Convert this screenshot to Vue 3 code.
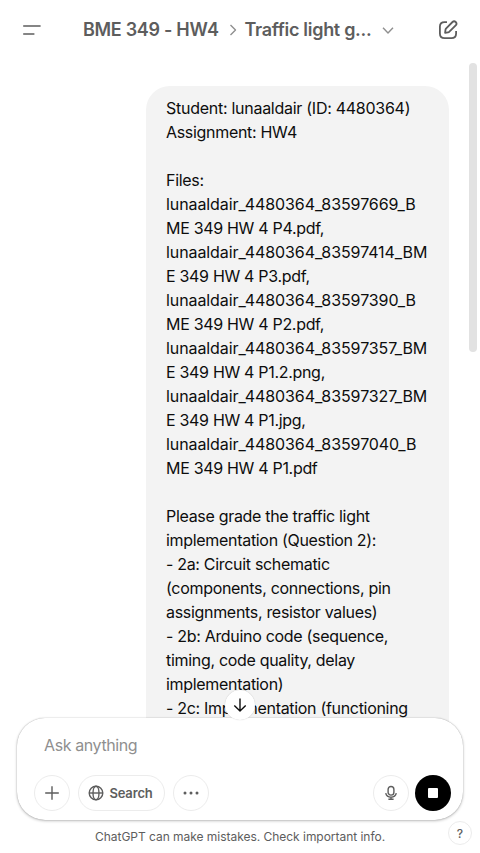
<script setup>
const lines = [
  'Student: lunaaldair (ID: 4480364)',
  'Assignment: HW4',
  '',
  'Files:',
  'lunaaldair_4480364_83597669_B',
  'ME 349 HW 4 P4.pdf,',
  'lunaaldair_4480364_83597414_BM',
  'E 349 HW 4 P3.pdf,',
  'lunaaldair_4480364_83597390_B',
  'ME 349 HW 4 P2.pdf,',
  'lunaaldair_4480364_83597357_BM',
  'E 349 HW 4 P1.2.png,',
  'lunaaldair_4480364_83597327_BM',
  'E 349 HW 4 P1.jpg,',
  'lunaaldair_4480364_83597040_B',
  'ME 349 HW 4 P1.pdf',
  '',
  'Please grade the traffic light',
  'implementation (Question 2):',
  '- 2a: Circuit schematic',
  '(components, connections, pin',
  'assignments, resistor values)',
  '- 2b: Arduino code (sequence,',
  'timing, code quality, delay',
  'implementation)',
  '- 2c: Implementation (functioning',
]
</script>

<template>
  <div class="page">
    <header class="top">
      <button class="icon-btn menu" aria-label="Menu">
        <svg width="20" height="20" viewBox="0 0 20 20"><path d="M1.2 6H18.6M1.2 14H12.4" /></svg>
      </button>
      <div class="crumbs">
        <span class="project">BME 349 - HW4</span>
        <svg class="sep" width="8" height="12" viewBox="0 0 8 12"><path d="M1.5 1L6.5 6L1.5 11" /></svg>
        <span class="title">Traffic light g...</span>
        <svg class="down" width="12" height="8" viewBox="0 0 12 8"><path d="M1 1.7L6 6.9L11 1.7" /></svg>
      </div>
      <button class="icon-btn edit" aria-label="New chat">
        <svg width="20" height="20" viewBox="0 0 20 20">
          <path d="M9 2.1H6.6C3.4 2.1 1.9 3.6 1.9 6.6V13.4C1.9 16.6 3.4 18.1 6.6 18.1H13.4C16.6 18.1 18.1 16.6 18.1 13.4V11" />
          <path d="M7.1 12.9L7.5 9.7C7.6 9.1 7.8 8.7 8.2 8.3L14.5 2C15.4 1.1 16.8 1.1 17.7 2C18.6 2.9 18.6 4.4 17.7 5.3L11.4 11.6C11 12 10.6 12.3 10 12.4Z" />
        </svg>
      </button>
    </header>

    <main class="thread">
      <article class="bubble">
        <div v-for="(line, i) in lines" :key="i" class="line" :class="{ file: line.startsWith('lunaaldair_'), student: i === 0 }">{{ line }}</div>
      </article>
      <div class="track"><div class="thumb"></div></div>
    </main>

    <section class="composer">
      <button class="scroll-down" aria-label="Scroll to bottom">
        <svg width="16" height="16" viewBox="0 0 16 16"><path d="M8 1.5V14M2.3 8.5L8 14L13.7 8.5" /></svg>
      </button>
      <div class="prompt">Ask anything</div>
      <div class="tools">
        <button class="round" aria-label="Add">
          <svg width="16" height="16" viewBox="0 0 16 16"><path d="M8 1.2V14.8M1.2 8H14.8" /></svg>
        </button>
        <button class="search">
          <svg width="16" height="16" viewBox="0 0 16 16">
            <circle cx="8" cy="8" r="6.8" /><ellipse cx="8" cy="8" rx="3" ry="6.8" /><path d="M1.2 8H14.8" />
          </svg>
          <span>Search</span>
        </button>
        <button class="round" aria-label="More">
          <svg class="dots" width="18" height="18" viewBox="0 0 18 18">
            <circle cx="3" cy="9" r="1.5" /><circle cx="9" cy="9" r="1.5" /><circle cx="15" cy="9" r="1.5" />
          </svg>
        </button>
        <button class="round mic" aria-label="Dictate">
          <svg width="16" height="16" viewBox="0 0 16 16">
            <rect x="5.1" y="1.5" width="5.8" height="8.6" rx="2.9" />
            <path d="M2.7 8.2C3.3 10.8 5.3 12.2 8 12.2C10.7 12.2 12.7 10.8 13.3 8.2M8 12.2V14.3M5.4 14.3H10.6" />
          </svg>
        </button>
        <button class="stop" aria-label="Stop"><span></span></button>
      </div>
    </section>

    <footer class="foot">
      <p>ChatGPT can make mistakes. Check important info.</p>
      <button class="help" aria-label="Help">?</button>
    </footer>
  </div>
</template>

<style>
body { background: #fff; }
</style>

<style scoped>
.page {
  width: 480px;
  height: 853px;
  display: flex;
  flex-direction: column;
  overflow: hidden;
  background: #fff;
  color: #0d0d0d;
  font-family: Inter, "Liberation Sans", sans-serif;
}
button {
  display: flex;
  align-items: center;
  justify-content: center;
  box-sizing: border-box;
  padding: 0;
  border: 0;
  background: none;
  font-family: inherit;
  color: #5d5d5d;
}
svg { display: block; fill: none; stroke: currentColor; stroke-width: 1.4; stroke-linejoin: round; flex: none; }
.top { display: flex; align-items: center; height: 60px; padding: 0 22px; flex: none; box-sizing: border-box; }
.icon-btn { width: 20px; height: 20px; }
.menu svg { stroke-width: 1.7; }
.edit { margin-left: auto; }
.edit svg { stroke-width: 1.8; }
.crumbs { display: flex; align-items: center; margin-left: 41px; color: #5d5d5d; font-size: 18px; font-weight: 600; line-height: 28px; white-space: nowrap; }
.project { width: 136px; letter-spacing: -0.3px; }
.sep { margin: 0 8px 0 9.5px; color: #8f8f8f; }
.title { width: 127px; letter-spacing: -0.3px; }
.down { margin-left: 10.5px; color: #8f8f8f; }
.thread { display: flex; justify-content: flex-end; align-items: flex-start; height: 670px; flex: none; overflow: hidden; }
.bubble { width: 303px; height: 700px; flex: none; box-sizing: border-box; margin-top: 26px; padding: 10px 20px; border-radius: 24px 24px 0 0; background: #f3f3f3; }
.line { height: 24px; font-size: 16px; line-height: 24px; letter-spacing: -0.31px; white-space: pre; }
.line.file { letter-spacing: -0.09px; }
.line.student { letter-spacing: -0.27px; }
.track { width: 8px; margin: 3px 3px 0 20px; }
.thumb { height: 289px; border-radius: 4px; background: #e2e2e2; }
.composer {
  position: relative;
  width: 446px;
  height: 102px;
  margin: -12px 0 0 17px;
  padding: 15px 12px 9px 17px;
  box-sizing: border-box;
  flex: none;
  border-radius: 28px;
  background: #fff;
  box-shadow: 0 0 1px rgba(0, 0, 0, 0.35), 0 1px 3px rgba(0, 0, 0, 0.25);
}
.prompt { padding-left: 10px; height: 24px; font-size: 16px; line-height: 24px; color: #8f8f8f; letter-spacing: -0.4px; }
.tools { display: flex; align-items: center; gap: 8px; margin-top: 18px; height: 36px; }
.round { width: 36px; height: 36px; border: 1px solid #ececec; border-radius: 50%; flex: none; }
.search { width: 87px; height: 36px; gap: 5px; padding-right: 2px; border: 1px solid #ececec; border-radius: 18px; font-size: 13px; font-weight: 600; letter-spacing: -0.15px; }
.dots { fill: currentColor; stroke: none; }
.mic { margin-left: auto; margin-right: -2px; }
.stop { width: 36px; height: 36px; border-radius: 50%; background: #000; }
.stop span { width: 10px; height: 10px; border-radius: 1px; background: #fff; }
.scroll-down { position: absolute; left: 208px; top: -28px; width: 30px; height: 30px; border-radius: 50%; background: #fff; color: #0d0d0d; box-shadow: 0 0 1px rgba(0, 0, 0, 0.25); }
.foot { display: flex; height: 33px; flex: none; }
.foot p { width: 290px; margin: 9px 0 0 95px; font-size: 12px; line-height: 16px; color: #5d5d5d; letter-spacing: -0.03px; white-space: nowrap; }
.help { width: 24px; height: 24px; margin: 1px 0 0 63px; border: 1px solid #ececec; border-radius: 50%; font-size: 12px; font-weight: 500; flex: none; }
</style>
